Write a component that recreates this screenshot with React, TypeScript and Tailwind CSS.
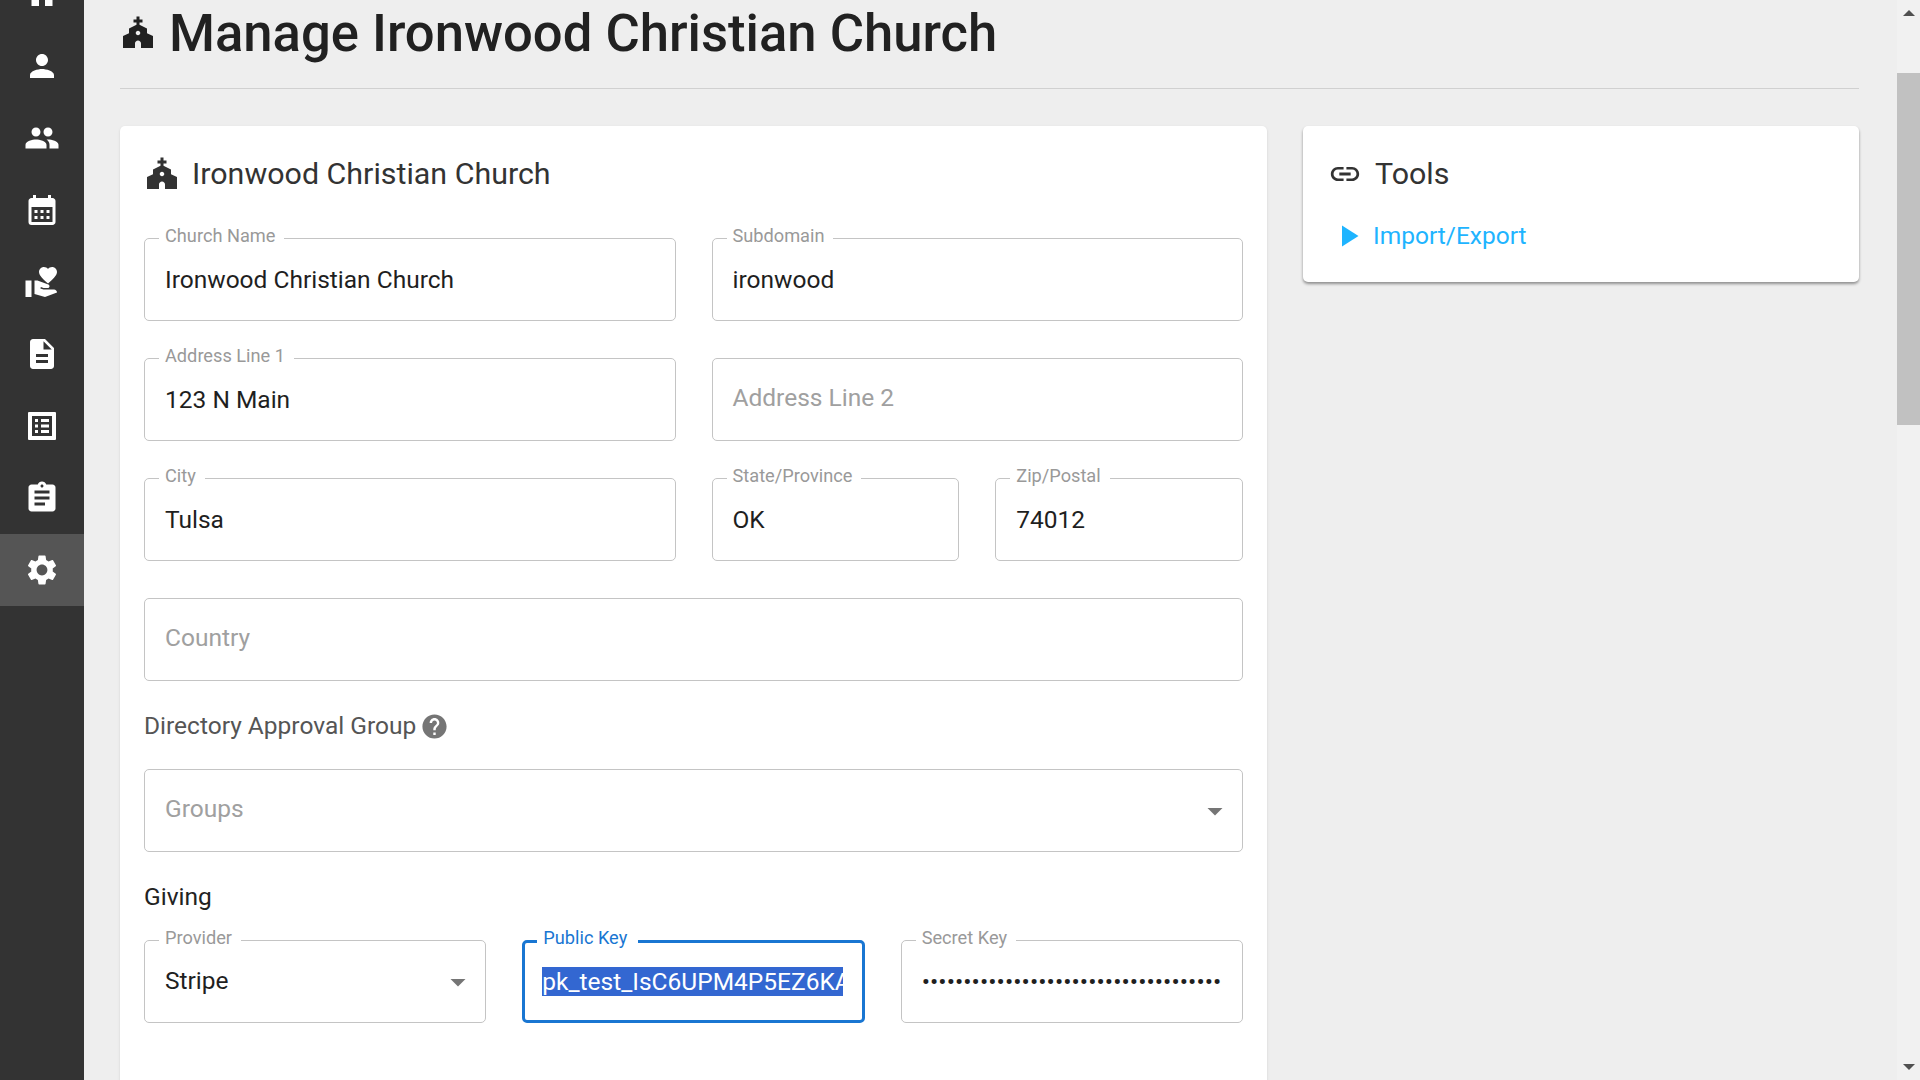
import type { ReactNode } from "react";
import {
  MdArrowDropDown,
  MdAssignment,
  MdCalendarMonth,
  MdChurch,
  MdDescription,
  MdHelp,
  MdHome,
  MdLink,
  MdPeople,
  MdPerson,
  MdPlayArrow,
  MdSettings,
  MdVolunteerActivism,
} from "react-icons/md";

// the list icon in the sidebar is heavier than MdListAlt
const ListIcon = ({ size }: { size?: number }) => (
  <svg width={size} height={size} viewBox="0 0 36 36" fill="none">
    <path
      fill="currentColor"
      fillRule="evenodd"
      d="M5 4h26a1 1 0 0 1 1 1v26a1 1 0 0 1-1 1H5a1 1 0 0 1-1-1V5a1 1 0 0 1 1-1zM8 8v20h20V8z"
    />
    <path
      fill="currentColor"
      d="M11 11h3v3h-3zM17 11h8v3h-8zM11 16.500h3v3h-3zM17 16.500h8v3h-8zM11 22h3v3h-3zM17 22h8v3h-8z"
    />
  </svg>
);

const navItems = [
  { icon: MdHome },
  { icon: MdPerson },
  { icon: MdPeople },
  { icon: MdCalendarMonth },
  { icon: MdVolunteerActivism },
  { icon: MdDescription },
  { icon: ListIcon },
  { icon: MdAssignment },
  { icon: MdSettings, active: true },
];

const Field = ({
  label,
  focused,
  children,
}: {
  label?: string;
  focused?: boolean;
  children: ReactNode;
}) => (
  <div
    className={
      focused
        ? "relative h-[83px] flex items-center pl-[17px] pr-[19px] rounded-[5px] border-[3px] border-[#1976d2]"
        : "relative h-[83px] flex items-center pl-[20px] pr-[20px] rounded-[5px] border border-[#c4c4c4]"
    }
  >
    {label && (
      <span
        className={
          focused
            ? "absolute left-[12px] -top-[17px] pl-[6px] pr-[11px] bg-white text-[18.2px] leading-[24px] text-[#1976d2]"
            : "absolute left-[14px] -top-[15px] pl-[6px] pr-[9px] bg-white text-[18.2px] leading-[24px] text-[#999999]"
        }
      >
        {label}
      </span>
    )}
    {children}
  </div>
);

const Value = ({ children }: { children: ReactNode }) => (
  <span className="mt-[2px] text-[24.5px] text-[#1f1f1f] whitespace-nowrap">{children}</span>
);

const Placeholder = ({ children }: { children: ReactNode }) => (
  <span className="-mt-[2px] text-[24.5px] text-[#a0a0a0] whitespace-nowrap">{children}</span>
);

export default function App() {
  return (
    <div
      className="h-screen flex overflow-hidden bg-[#eeeeee]"
      style={{ fontFamily: "Roboto, sans-serif" }}
    >
      {/* Sidebar */}
      <aside className="w-[84px] shrink-0 bg-[#333333]">
        <div className="-mt-[42px]">
          {navItems.map((item, i) => (
            <div
              key={i}
              className={
                item.active
                  ? "h-[72px] flex items-center justify-center bg-[#555555] text-white"
                  : "h-[72px] flex items-center justify-center text-white"
              }
            >
              <item.icon size={36} />
            </div>
          ))}
        </div>
      </aside>

      {/* Page */}
      <main className="flex-1 min-w-0 pl-[36px] pr-[38px]">
        <div className="h-[89px] pb-[22px] flex items-center gap-[13px] border-b border-[#d0d0d0]">
          <MdChurch size={36} className="text-[#212121]" />
          <h1 className="text-[52.6px] leading-none font-medium text-[#212121] whitespace-nowrap">
            Manage Ironwood Christian Church
          </h1>
        </div>

        <div className="mt-[37px] flex items-start gap-[36px]">
          {/* Church card */}
          <section className="w-[1147px] shrink-0 h-[1000px] bg-white rounded-[5px] shadow-sm px-[24px] pt-[24px]">
            <div className="h-[48px] flex items-center gap-[12px] text-[#333333]">
              <MdChurch size={36} />
              <h2 className="text-[30.4px] whitespace-nowrap">Ironwood Christian Church</h2>
            </div>

            <div className="mt-[40px] grid grid-cols-2 gap-x-[36px] gap-y-[37px]">
              <Field label="Church Name"><Value>Ironwood Christian Church</Value></Field>
              <Field label="Subdomain"><Value>ironwood</Value></Field>
              <Field label="Address Line 1"><Value>123 N Main</Value></Field>
              <Field><Placeholder>Address Line 2</Placeholder></Field>
              <Field label="City"><Value>Tulsa</Value></Field>
              <div className="grid grid-cols-2 gap-x-[36px]">
                <Field label="State/Province"><Value>OK</Value></Field>
                <Field label="Zip/Postal"><Value>74012</Value></Field>
              </div>
            </div>

            <div className="mt-[37px]">
              <Field><Placeholder>Country</Placeholder></Field>
            </div>

            <div className="mt-[30px] h-[30px] flex items-center gap-[4px] text-[24.5px] text-[#555555]">
              <span>Directory Approval Group</span>
              <MdHelp size={29} className="text-[#757575]" />
            </div>

            <div className="mt-[28px]">
              <Field>
                <Placeholder>Groups</Placeholder>
                <MdArrowDropDown size={36} className="ml-auto -mr-[11px] text-[#757575]" />
              </Field>
            </div>

            <div className="mt-[30px] h-[30px] flex items-center text-[24.5px] text-[#222222]">Giving</div>

            <div className="mt-[28px] grid grid-cols-3 gap-x-[36px]">
              <Field label="Provider">
                <span className="text-[24.5px] text-[#1f1f1f]">Stripe</span>
                <MdArrowDropDown size={36} className="ml-auto -mr-[11px] text-[#757575]" />
              </Field>
              <Field label="Public Key" focused>
                <span className="block w-full overflow-hidden whitespace-nowrap bg-[#3367d1] text-white text-[24.5px] leading-[29px]">
                  pk_test_IsC6UPM4P5EZ6KA
                </span>
              </Field>
              <Field label="Secret Key">
                <span className="mt-[2px] block whitespace-nowrap text-[24.5px] tracking-[0.06px] text-[#1f1f1f]">
                  ••••••••••••••••••••••••••••••••••••
                </span>
              </Field>
            </div>
          </section>

          {/* Tools card */}
          <section className="flex-1 h-[156px] bg-white rounded-[5px] shadow-[0_2px_3px_rgba(0,0,0,0.4)] px-[24px] pt-[24px]">
            <div className="h-[48px] flex items-center gap-[13px] text-[#333333]">
              <MdLink size={34} className="ml-[1px]" />
              <h2 className="text-[30.4px]">Tools</h2>
            </div>
            <a className="mt-[20px] ml-[3px] flex items-center gap-[7px] text-[24.5px] text-[#1eb4ff]">
              <MdPlayArrow size={36} />
              Import/Export
            </a>
          </section>
        </div>
      </main>

      {/* Scrollbar */}
      <div className="w-[23px] shrink-0 bg-[#f1f1f1] flex flex-col items-center">
        <div className="mt-[10px] w-0 h-0 border-x-[6px] border-x-transparent border-b-[6px] border-b-[#505050]" />
        <div className="mt-[57px] w-full h-[352px] bg-[#c1c1c1]" />
        <div className="mt-auto mb-[10px] w-0 h-0 border-x-[6px] border-x-transparent border-t-[6px] border-t-[#505050]" />
      </div>
    </div>
  );
}
